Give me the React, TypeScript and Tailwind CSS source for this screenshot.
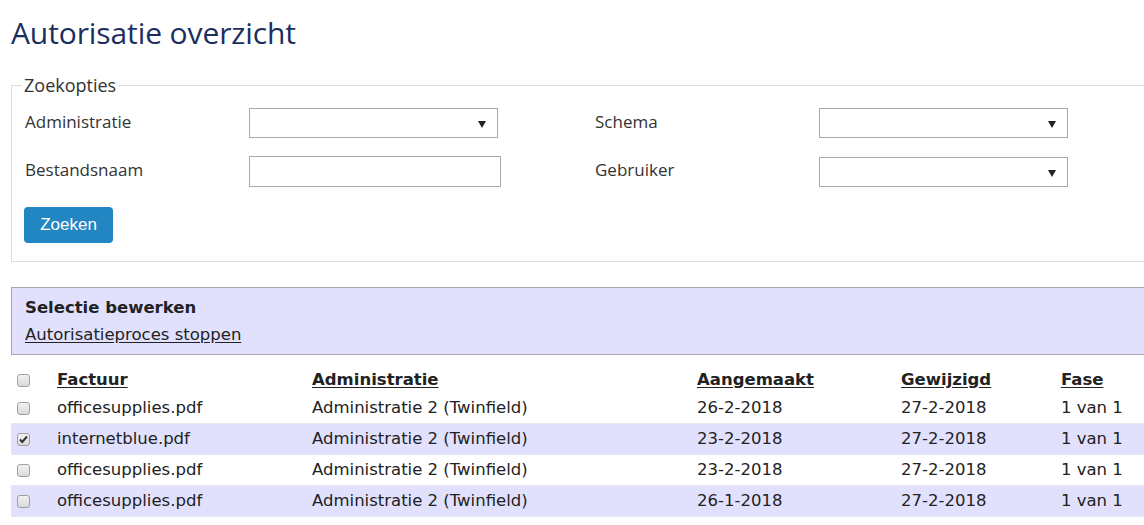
import React from "react";

const Arrow = () => (
  <svg width="8" height="8" viewBox="0 0 8 8" className="absolute right-[11px] top-[11px]">
    <path d="M0 1 H8 L4 8 Z" fill="#222" />
  </svg>
);

const Select = ({ w }: { w: string }) => (
  <div className={`relative h-[30px] ${w} border border-[#a9a9a9] bg-white`}>
    <Arrow />
  </div>
);

const Check = ({ checked }: { checked?: boolean }) => (
  <span className="relative inline-block w-[13px] h-[13px] rounded-[3px] border border-[#a0a0a0] bg-gradient-to-b from-[#f2f2f2] to-[#d9d9d9]">
    {checked && (
      <svg width="11" height="11" viewBox="0 0 11 11" className="absolute left-0 top-0">
        <path d="M2 5.5 L4.3 8 L9 2.5" stroke="#333" strokeWidth="2" fill="none" />
      </svg>
    )}
  </span>
);

const rows = [
  { f: "officesupplies.pdf", a: "26-2-2018", c: false },
  { f: "internetblue.pdf", a: "23-2-2018", c: true },
  { f: "officesupplies.pdf", a: "23-2-2018", c: false },
  { f: "officesupplies.pdf", a: "26-1-2018", c: false },
];

const gridCols = "grid grid-cols-[40px_255px_385px_204px_160px_1fr] items-center";

export default function App() {
  return (
    <div className="w-[1144px] h-[525px] overflow-hidden bg-white text-[#333]" style={{ fontFamily: '"Open Sans", sans-serif' }}>
      <div className="pl-[11px] pt-[13px]">
        <h1 className="text-[30px] leading-[40px] text-[#1b2f5e] tracking-[-0.1px]" style={{ fontFamily: '"Open Sans", sans-serif' }}>
          Autorisatie overzicht
        </h1>

        <fieldset className="mt-[22px] w-[1200px] h-[187px] border border-[#dddddd] pl-[10px] pr-0 pb-0">
          <legend className="px-[2px] text-[18px] leading-[20px] text-[#333]">Zoekopties</legend>
          <div className="pl-[3px] pt-[13px]">
            <div className="grid grid-cols-[224px_346px_224px_250px] items-start text-[17px]">
              <div className="h-[30px] leading-[28px]">Administratie</div>
              <Select w="w-[249px]" />
              <div className="h-[30px] leading-[28px]">Schema</div>
              <Select w="w-[249px]" />
              <div className="mt-[18px] h-[31px] leading-[28px]">Bestandsnaam</div>
              <div className="mt-[18px] h-[31px] w-[252px] border border-[#a9a9a9] bg-white" />
              <div className="mt-[18px] h-[31px] leading-[28px]">Gebruiker</div>
              <div className="mt-[19px]">
                <Select w="w-[249px]" />
              </div>
            </div>
            <button
              className="-ml-[1px] mt-[20px] h-[36px] w-[89px] rounded-[4px] bg-[#2286c3] text-white text-[17px]"
              style={{ fontFamily: '"Liberation Sans", Arial, sans-serif' }}
            >
              Zoeken
            </button>
          </div>
        </fieldset>

        <div style={{ fontFamily: '"DejaVu Sans", Verdana, sans-serif' }} className="text-[16.5px] text-[#222]">
          <div className="mt-[25px] w-[1200px] h-[68px] border border-[#a8a8a8] bg-[#e1e1fe] pl-[13px] pt-[8px]">
            <div className="font-bold leading-[24px]">Selectie bewerken</div>
            <div className="underline leading-[24px] mt-[3px] underline-offset-[2px]">Autorisatieproces stoppen</div>
          </div>

          <div className="mt-[12px] w-[1140px]">
            <div className={`${gridCols} h-[26px] pl-[6px] font-bold`}>
              <div className="flex items-center"><Check /></div>
              <div className="underline underline-offset-[2px]">Factuur</div>
              <div className="underline underline-offset-[2px]">Administratie</div>
              <div className="underline underline-offset-[2px]">Aangemaakt</div>
              <div className="underline underline-offset-[2px]">Gewijzigd</div>
              <div className="underline underline-offset-[2px]">Fase</div>
            </div>
            {rows.map((r, i) => (
              <div
                key={i}
                className={`${gridCols} h-[31px] pl-[6px] border-b border-[#e6e6f0] ${i % 2 === 1 ? "bg-[#e1e1fe]" : "bg-white"}`}
              >
                <div className="flex items-center"><Check checked={r.c} /></div>
                <div>{r.f}</div>
                <div>Administratie 2 (Twinfield)</div>
                <div>{r.a}</div>
                <div>27-2-2018</div>
                <div>1 van 1</div>
              </div>
            ))}
          </div>
        </div>
      </div>
    </div>
  );
}
